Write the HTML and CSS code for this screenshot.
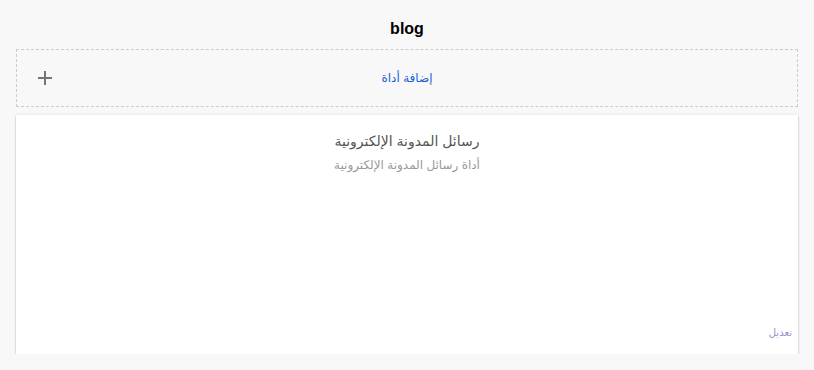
FILE: index.html
```html
<!DOCTYPE html>
<html lang="ar">
<head>
<meta charset="utf-8">
<title>blog</title>
<link rel="stylesheet" href="styles.css">
</head>
<body>
<div class="page">
  <h1 class="title">blog</h1>
  <div class="add-widget">
    <svg class="plus" width="14" height="14" viewBox="0 0 14 14" aria-hidden="true">
      <rect x="0" y="6" width="14" height="2" fill="#757575"/>
      <rect x="6" y="0" width="2" height="14" fill="#757575"/>
    </svg>
    <a class="add-link" dir="rtl">إضافة أداة</a>
  </div>
  <div class="card" dir="rtl">
    <div class="card-head">
      <div class="card-title">رسائل المدونة الإلكترونية</div>
      <div class="card-sub">أداة رسائل المدونة الإلكترونية</div>
    </div>
    <div class="card-foot">
      <a class="edit">تعديل</a>
    </div>
  </div>
</div>
</body>
</html>
```
FILE: styles.css
```css
html, body {
  margin: 0;
  padding: 0;
  background: #f8f8f8;
  font-family: "Liberation Sans", Arial, "DejaVu Sans", sans-serif;
}
.page {
  padding: 16px 16px 0 16px;
  display: flex;
  flex-direction: column;
}
.title {
  margin: 0;
  height: 26px;
  font-size: 16px;
  font-weight: bold;
  color: #000;
  text-align: center;
  line-height: 26px;
}
.add-widget {
  margin-top: 7px;
  height: 56px;
  border: 1px dashed #cccccc;
  display: flex;
  align-items: center;
  justify-content: center;
  position: relative;
}
.plus {
  position: absolute;
  left: 21px;
  top: 21px;
}
.add-link {
  font-size: 12px;
  color: #1a5fd6;
}
.card {
  margin-top: 8px;
  height: 239px;
  background: #fff;
  box-shadow: 0 2px 2px rgba(0,0,0,0.22), 0 0 2px rgba(0,0,0,0.12);
  display: flex;
  flex-direction: column;
  justify-content: space-between;
}
.card-head {
  padding-top: 16px;
  text-align: center;
}
.card-title {
  font-size: 14px;
  color: #555;
  line-height: 20px;
}
.card-sub {
  margin-top: 6px;
  font-size: 12px;
  color: #999;
  line-height: 16px;
}
.card-foot {
  padding: 0 6px 16px 6px;
  display: flex;
  justify-content: flex-end;
  direction: ltr;
}
.edit {
  font-size: 10px;
  color: #a08cc8;
}
```
